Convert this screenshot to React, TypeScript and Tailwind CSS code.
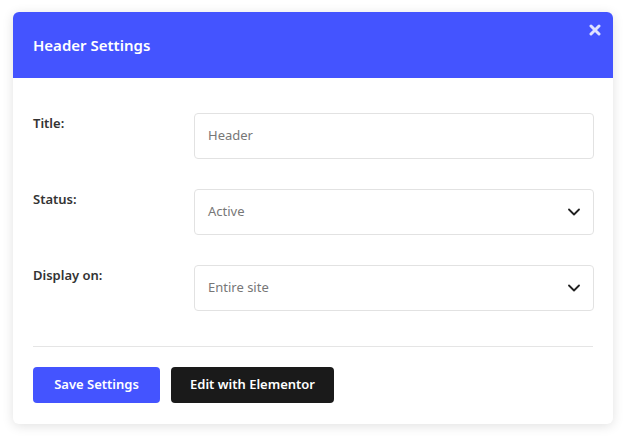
const fields = [
	{ label: "Title:", value: "Header", select: false },
	{ label: "Status:", value: "Active", select: true },
	{ label: "Display on:", value: "Entire site", select: true },
];

const App = () => {
	return (
		<div className="min-h-screen bg-white pt-3 px-[13px] font-['Noto_Sans',sans-serif]">
			<div className="w-[600px] rounded-md bg-white shadow-[0_2px_12px_rgba(0,0,0,0.12)] overflow-hidden">
				{/* header */}
				<div className="relative h-[66px] bg-[#4454ff] flex items-center px-5">
					<h2 className="text-[15px] font-semibold text-white">Header Settings</h2>
					<button className="absolute top-3 right-3 text-[#dfe2ff]">
						<svg width="12" height="12" viewBox="0 0 12 12" fill="none" stroke="currentColor" strokeWidth="3" strokeLinecap="round">
							<path d="M2 2l8 8M10 2l-8 8" />
						</svg>
					</button>
				</div>

				{/* form */}
				<div className="px-5 pt-[35px] pb-[21px]">
					<div className="grid gap-y-[30px]">
						{fields.map((f) => (
							<div key={f.label} className="flex">
								<label className="w-[161px] pt-[1px] text-[13px] font-semibold text-[#333]">
									{f.label}
								</label>
								<div className="h-[46px] w-[400px] rounded-[4px] border border-[#e2e2e2] flex items-center justify-between pl-[13px] pr-[13px]">
									<span className="text-[13px] text-[#777]">{f.value}</span>
									{f.select && (
										<svg width="12" height="8" viewBox="0 0 12 8" fill="none" stroke="#222" strokeWidth="1.8" strokeLinecap="round" strokeLinejoin="round">
											<path d="M1 1.5l5 5 5-5" />
										</svg>
									)}
								</div>
							</div>
						))}
					</div>

					<div className="mt-[35px] border-t border-[#e5e5e5]" />

					<div className="mt-5 flex gap-[11px]">
						<button className="h-9 w-[127px] rounded-[4px] bg-[#4454ff] text-[13px] font-semibold text-white">
							Save Settings
						</button>
						<button className="h-9 w-[163px] rounded-[4px] bg-[#1a1a1a] text-[13px] font-semibold text-white">
							Edit with Elementor
						</button>
					</div>
				</div>
			</div>
		</div>
	);
};

export default App;
